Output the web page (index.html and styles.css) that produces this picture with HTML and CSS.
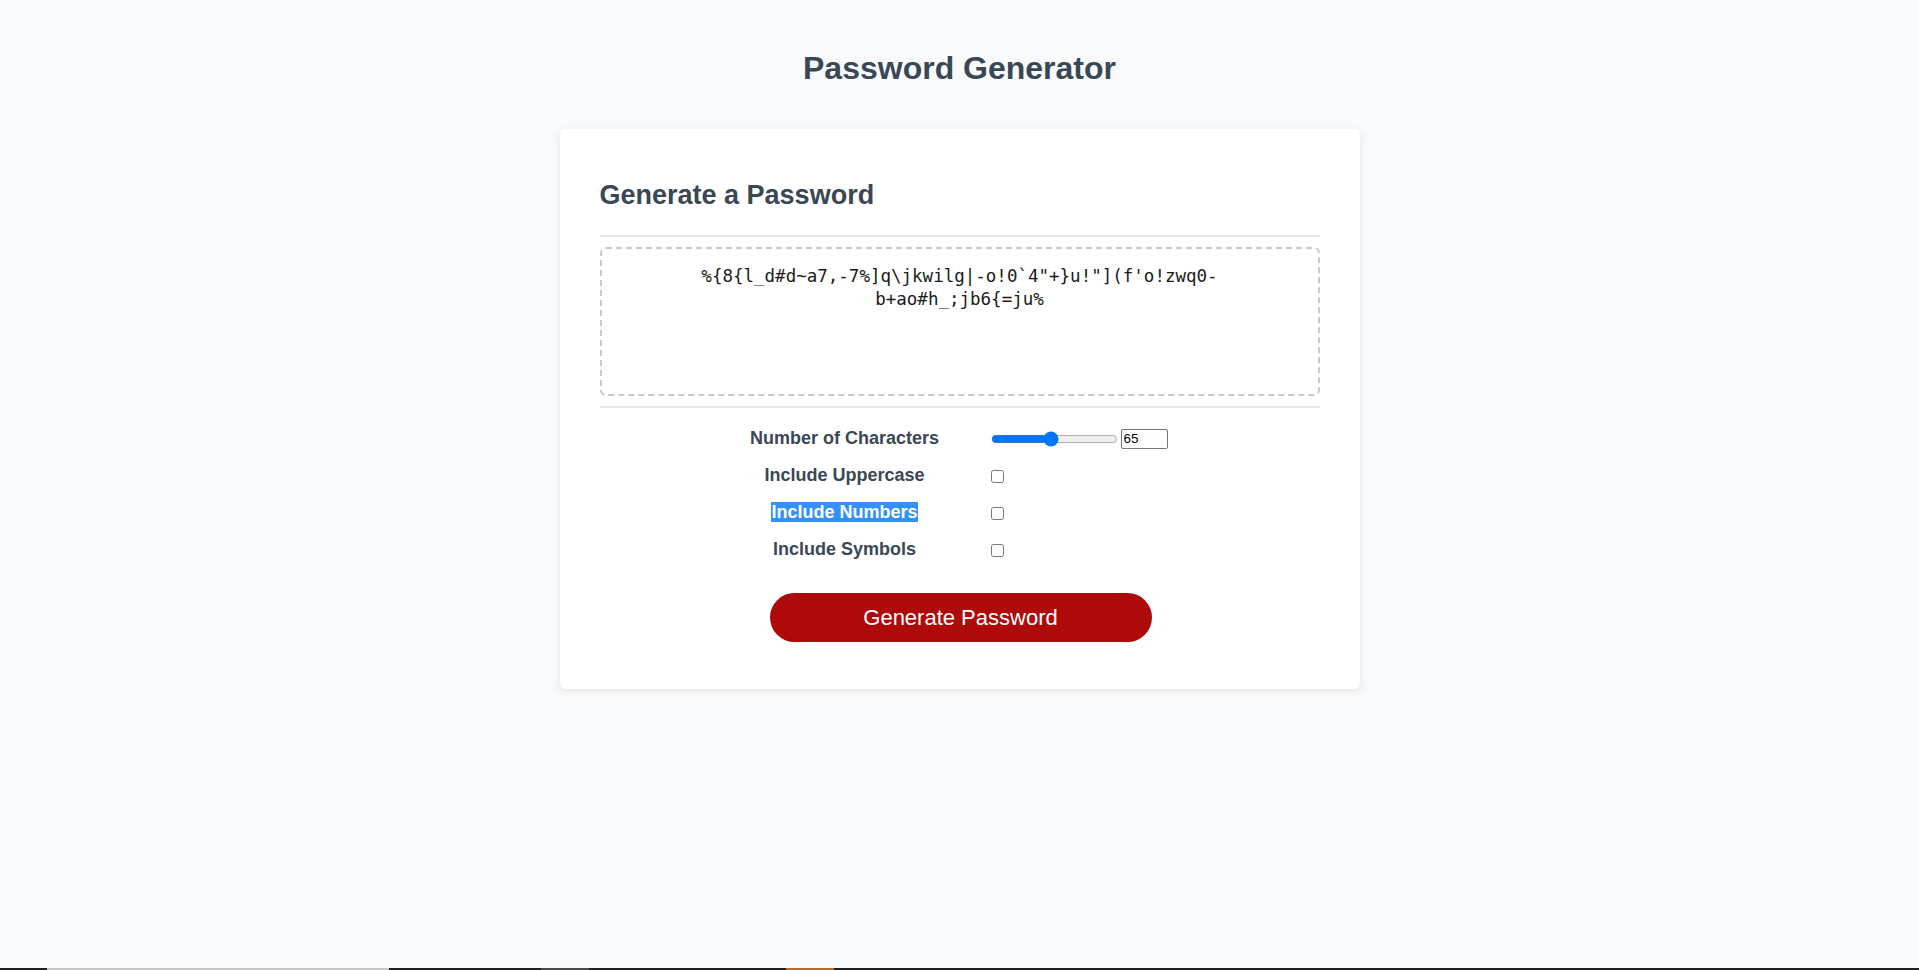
FILE: index.html
```html
<!DOCTYPE html>
<html lang="en">
<head>
<meta charset="utf-8">
<title>Password Generator</title>
<link rel="stylesheet" href="styles.css">
</head>
<body>
<div class="page">
  <header class="header">
    <h1 class="title">Password Generator</h1>
  </header>
  <main class="card">
    <h2 class="card-title">Generate a Password</h2>
    <hr class="divider">
    <div class="output">%{8{l_d#d~a7,-7%]q\jkwilg|-o!0`4"+}u!"](f'o!zwq0-b+ao#h_;jb6{=ju%</div>
    <hr class="divider">
    <form class="options">
      <label class="opt-label" for="len">Number of Characters</label>
      <div class="opt-control">
        <input class="range" type="range" id="len" min="8" max="128" value="65">
        <input class="num" type="number" min="8" max="128" value="65">
      </div>
      <label class="opt-label" for="upper">Include Uppercase</label>
      <div class="opt-control"><input class="check" type="checkbox" id="upper"></div>
      <label class="opt-label" for="numbers"><span class="selected">Include Numbers</span></label>
      <div class="opt-control"><input class="check" type="checkbox" id="numbers"></div>
      <label class="opt-label" for="symbols">Include Symbols</label>
      <div class="opt-control"><input class="check" type="checkbox" id="symbols"></div>
    </form>
    <button class="generate" type="button">Generate Password</button>
  </main>
  <div class="taskbar">
    <span class="tb-seg tb-light"></span>
    <span class="tb-seg tb-grey"></span>
    <span class="tb-seg tb-orange"></span>
  </div>
</div>
</body>
</html>
```

FILE: styles.css
```css
* { box-sizing: border-box; }

html, body {
  margin: 0;
  padding: 0;
}

body {
  background: #f9fafb;
  font-family: "Liberation Sans", Arial, sans-serif;
  color: #3a4755;
}

.page {
  min-height: 100vh;
  display: flex;
  flex-direction: column;
  align-items: center;
}

.header {
  padding-top: 50px;
}

.title {
  margin: 0 0 42px;
  font-size: 32px;
  font-weight: 700;
  line-height: normal;
  text-align: center;
  color: #3a4755;
}

.card {
  width: 800px;
  background: #ffffff;
  border-radius: 5px;
  box-shadow: 0 2px 8px rgba(0, 0, 0, 0.09);
  padding: 40px 40px 47px;
}

.card-title {
  margin: 11px 0 24px;
  font-size: 27px;
  font-weight: 700;
  line-height: normal;
  color: #3a4755;
}

.divider {
  border: 0;
  height: 2px;
  margin: 0;
  background: #e6e7e9;
}

.output {
  margin: 10px 0;
  height: 149px;
  border: 2px dashed #c5cad2;
  border-radius: 6px;
  padding: 16px 20px;
  text-align: center;
  font-family: "DejaVu Sans Mono", "Liberation Mono", monospace;
  font-size: 17.5px;
  line-height: 23.3px;
  color: #1a1a1a;
}

.options {
  margin-top: 12px;
  display: grid;
  grid-template-columns: 230px 199px;
  grid-auto-rows: 37px;
  column-gap: 31px;
  justify-content: center;
  align-items: center;
}

.opt-label {
  text-align: center;
  font-size: 18px;
  font-weight: 700;
  line-height: normal;
  color: #3a4755;
}

.selected {
  background: #3390ff;
  color: #ffffff;
}

.opt-control {
  display: flex;
  align-items: center;
}

.range {
  width: 127px;
  margin: 0;
  accent-color: #0075ff;
}

.num {
  width: 47px;
  height: 20px;
  margin: 0 0 0 3px;
  padding: 1px 2px;
  border: 1px solid #767676;
  border-radius: 2px;
  font-family: "Liberation Sans", Arial, sans-serif;
  font-size: 13.33px;
  color: #000;
}

.check {
  width: 13px;
  height: 13px;
  margin: 1px 0 0 0;
}

.generate {
  display: block;
  width: 382px;
  height: 49px;
  margin: 25px 0 0 calc(50% - 190px);
  padding: 0;
  border: 0;
  border-radius: 25px;
  background: #ae0a0a;
  color: #ffffff;
  font-family: "Liberation Sans", Arial, sans-serif;
  font-size: 22px;
  line-height: 49px;
  cursor: pointer;
}

.taskbar {
  margin-top: auto;
  align-self: stretch;
  height: 2px;
  background: #202020;
  display: flex;
}

.tb-seg {
  height: 2px;
  display: block;
}

.tb-light {
  margin-left: 47px;
  width: 342px;
  background: #c8c8c8;
}

.tb-grey {
  margin-left: 152px;
  width: 48px;
  background: #4a4a4a;
}

.tb-orange {
  margin-left: 197px;
  width: 48px;
  background: #c0681e;
}
```
